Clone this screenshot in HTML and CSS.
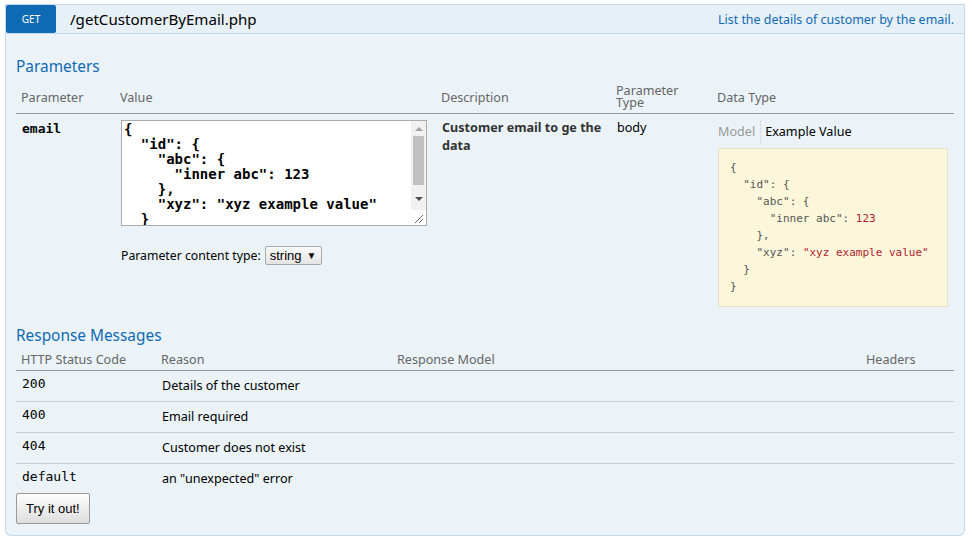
FILE: index.html
```html
<!DOCTYPE html>
<html>
<head>
<meta charset="utf-8">
<link rel="stylesheet" href="styles.css">
</head>
<body>
<div class="endpoint">
  <div class="heading">
    <span class="method">GET</span>
    <span class="path">/getCustomerByEmail.php</span>
    <span class="summary">List the details of customer by the email.</span>
  </div>
  <div class="content">
    <h4 class="section-title">Parameters</h4>
    <table class="params">
      <colgroup>
        <col class="c-param"><col class="c-value"><col class="c-desc"><col class="c-ptype"><col class="c-dtype">
      </colgroup>
      <thead>
        <tr>
          <th>Parameter</th>
          <th>Value</th>
          <th>Description</th>
          <th class="two-line">Parameter<br>Type</th>
          <th>Data Type</th>
        </tr>
      </thead>
      <tbody>
        <tr>
          <td class="pname">email</td>
          <td>
            <div class="ta-box">
              <textarea class="body-input" spellcheck="false">{
  "id": {
    "abc": {
      "inner abc": 123
    },
    "xyz": "xyz example value"
  }
}</textarea>
              <div class="vscroll">
                <span class="arr-up"></span>
                <span class="thumb"></span>
                <span class="arr-down"></span>
                <span class="grip">
                  <svg width="14" height="15" viewBox="0 0 14 15"><path d="M4 13 L12 5 M8 13 L12 9" stroke="#666" stroke-width="1" fill="none"/></svg>
                </span>
              </div>
            </div>
            <div class="ctype">
              <span>Parameter content type:</span>
              <span class="select">string <span class="arrow">▼</span></span>
            </div>
          </td>
          <td class="pdesc">Customer email to ge the data</td>
          <td class="ptype">body</td>
          <td>
            <div class="sig-nav">
              <span class="tab">Model</span>
              <span class="tab selected">Example Value</span>
            </div>
            <pre class="snippet">{
  <span class="k">"id"</span>: {
    <span class="k">"abc"</span>: {
      <span class="k">"inner abc"</span>: <span class="v">123</span>
    },
    <span class="k">"xyz"</span>: <span class="v">"xyz example value"</span>
  }
}</pre>
          </td>
        </tr>
      </tbody>
    </table>

    <h4 class="section-title responses-title">Response Messages</h4>
    <table class="responses">
      <colgroup>
        <col class="r-code"><col class="r-reason"><col class="r-model"><col class="r-headers">
      </colgroup>
      <thead>
        <tr>
          <th>HTTP Status Code</th>
          <th>Reason</th>
          <th>Response Model</th>
          <th>Headers</th>
        </tr>
      </thead>
      <tbody>
        <tr><td class="code">200</td><td>Details of the customer</td><td></td><td></td></tr>
        <tr><td class="code">400</td><td>Email required</td><td></td><td></td></tr>
        <tr><td class="code">404</td><td>Customer does not exist</td><td></td><td></td></tr>
        <tr class="last"><td class="code">default</td><td>an "unexpected" error</td><td></td><td></td></tr>
      </tbody>
    </table>
    <button class="try">Try it out!</button>
  </div>
</div>
</body>
</html>
```
FILE: styles.css
```css
html, body {
  margin: 0;
  padding: 0;
  background: #ffffff;
}
body {
  padding: 4px 0 0 5px;
  font-family: "Noto Sans", "Open Sans", sans-serif;
  color: #333;
}
.endpoint {
  width: 960px;
}
.heading {
  display: flex;
  align-items: center;
  height: 28px;
  background: #e7f0f7;
  border: 1px solid #c3d9ec;
}
.method {
  width: 50px;
  height: 28px;
  background: #0f6ab4;
  color: #fff;
  font-size: 10px;
  line-height: 29px;
  text-align: center;
  border-radius: 2px;
}
.path {
  margin-left: 14px;
  font-size: 15.1px;
  color: #000;
  flex: 1;
}
.summary {
  font-size: 12.45px;
  color: #0f6ab4;
  margin-right: 10px;
}
.content {
  background: #ebf3f9;
  border: 1px solid #c3d9ec;
  border-top: none;
  border-radius: 0 0 6px 6px;
  padding: 10px 10px 11px 10px;
}
.section-title {
  margin: 0;
  padding: 13px 0 4px 0;
  font-size: 15.4px;
  font-weight: normal;
  color: #0f6ab4;
  line-height: 20px;
}
table {
  width: 100%;
  border-collapse: collapse;
  table-layout: fixed;
}
th {
  text-align: left;
  font-weight: normal;
  color: #666;
  font-size: 12.6px;
  padding: 0 5px;
  border-bottom: 1px solid #999;
  vertical-align: middle;
}
.params th {
  height: 32px;
}
.params th.two-line {
  line-height: 12px;
  padding-top: 0;
}
td {
  font-size: 12.6px;
  vertical-align: top;
  padding: 6px;
  color: #333;
}
.c-param { width: 99px; }
.c-value { width: 321px; }
.c-desc { width: 175px; }
.c-ptype { width: 101px; }
.c-dtype { width: auto; }
.pname {
  font-family: "DejaVu Sans Mono", monospace;
  font-weight: bold;
  font-size: 13px;
  color: #000;
  padding-top: 7px;
}
.ta-box {
  display: flex;
  box-sizing: border-box;
  width: 306px;
  height: 106px;
  border: 1px solid #aaa;
  background: #fff;
}
.body-input {
  flex: 1;
  box-sizing: border-box;
  min-width: 0;
  height: 104px;
  margin: 0;
  padding: 1px 2px;
  font-family: "DejaVu Sans Mono", monospace;
  font-weight: bold;
  font-size: 14px;
  line-height: 15px;
  color: #000;
  background: #fff;
  border: none;
  outline: none;
  overflow: hidden;
  resize: none;
}
.vscroll {
  display: flex;
  flex-direction: column;
  width: 15px;
  background: #f1f1f1;
}
.arr-up, .arr-down {
  display: flex;
  justify-content: center;
  align-items: center;
  height: 15px;
}
.arr-up::before {
  content: "";
  border-left: 4px solid transparent;
  border-right: 4px solid transparent;
  border-bottom: 4px solid #a3a3a3;
}
.arr-down::before {
  content: "";
  border-left: 4px solid transparent;
  border-right: 4px solid transparent;
  border-top: 4px solid #505050;
}
.thumb {
  height: 49px;
  margin: 0 2px;
  background: #c1c1c1;
}
.arr-down {
  margin-top: auto;
}
.grip {
  display: block;
  height: 15px;
  margin-top: 4px;
  background: #fff;
}
.grip svg {
  display: block;
}
.ctype {
  display: flex;
  align-items: center;
  gap: 4px;
  margin-top: 20px;
  font-size: 12.25px;
  color: #000;
}
.select {
  display: inline-flex;
  align-items: center;
  gap: 5px;
  height: 17px;
  padding: 0 5px 0 4px;
  border: 1px solid #a9a9a9;
  border-radius: 2px;
  background: linear-gradient(#fafafa, #e4e4e4);
  font-family: "Liberation Sans", Arial, sans-serif;
  font-size: 13px;
  color: #000;
}
.arrow {
  font-size: 10px;
  color: #111;
}
.pdesc {
  font-weight: bold;
  line-height: 18px;
  padding-top: 5px;
}
.ptype {
  color: #000;
  padding-top: 5px;
}
.sig-nav {
  display: flex;
  align-items: center;
  height: 23px;
  margin-top: 0;
  font-size: 12.6px;
}
.tab {
  padding: 0 5px 0 0;
  color: #999;
  line-height: 23px;
}
.tab:first-child {
  border-right: 1px solid #ddd;
  margin-right: 4px;
}
.tab.selected {
  color: #000;
}
.snippet {
  box-sizing: border-box;
  margin: 5px 0 0 0;
  width: 230px;
  height: 159px;
  padding: 10px 11px;
  background: #fcf6db;
  border: 1px solid #e5e0c6;
  font-family: "DejaVu Sans Mono", monospace;
  font-size: 11px;
  line-height: 17px;
  color: #555;
}
.snippet .v {
  color: #b11e2d;
}
.responses-title {
  padding-top: 13px;
  padding-bottom: 2px;
}
.responses th {
  height: 22px;
  padding-top: 0;
}
.r-code { width: 140px; }
.r-reason { width: 236px; }
.r-model { width: 469px; }
.r-headers { width: auto; }
.responses td {
  height: 18px;
  border-bottom: 1px solid #ccc;
  padding: 6px;
  color: #000;
}
.responses tr.last td {
  border-bottom: none;
  padding-bottom: 0;
}
.responses td.code {
  font-family: "DejaVu Sans Mono", monospace;
  font-size: 13px;
  padding-top: 5px;
}
.try {
  display: block;
  margin-top: 5px;
  height: 31px;
  padding: 0 9px;
  font-family: "Liberation Sans", Arial, sans-serif;
  font-size: 13px;
  color: #000;
  background: linear-gradient(#fdfdfd, #dedede);
  border: 1px solid #999;
  border-radius: 2px;
}
```
